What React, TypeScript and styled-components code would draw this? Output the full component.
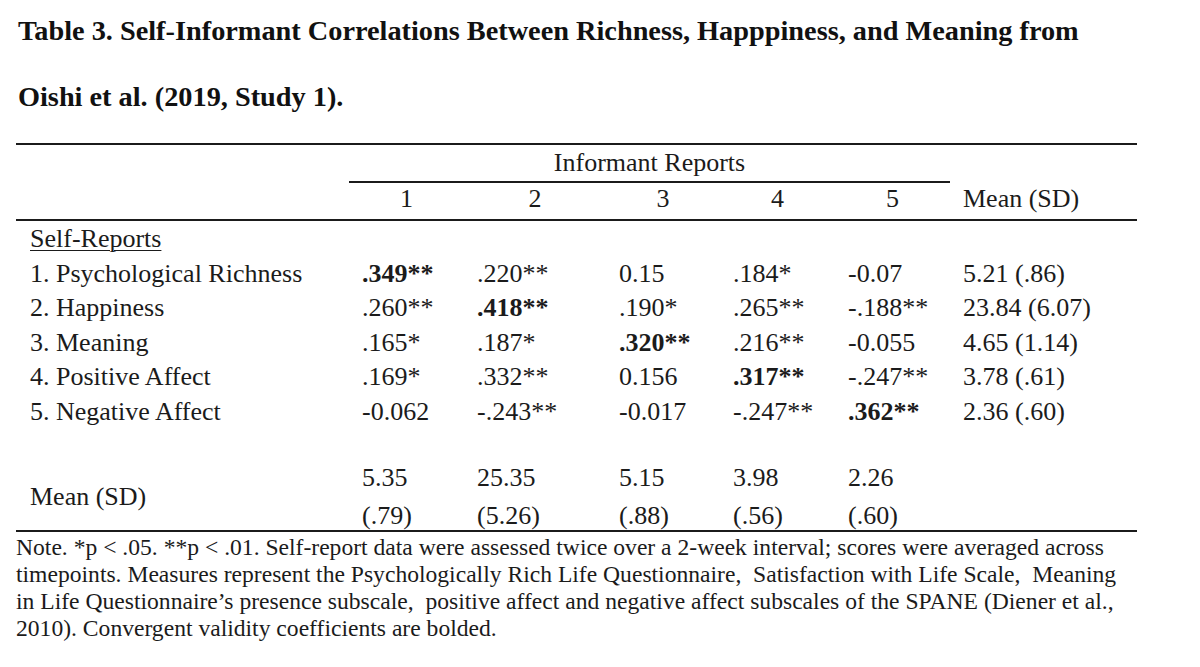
import React from "react";
import styled, { createGlobalStyle } from "styled-components";

const GlobalStyle = createGlobalStyle`
  html, body { margin: 0; padding: 0; background: #ffffff; }
  body {
    font-family: "Liberation Serif", "Times New Roman", serif;
    color: #1b1b1b;
  }
`;

const COLS = "333px 115px 142px 114px 115px 115px 187px";

const Page = styled.div`
  width: 1200px;
  height: 667px;
  overflow: hidden;
  padding-left: 16px;
  box-sizing: border-box;
`;

const Title = styled.h1`
  margin: -2px 0 0 2px;
  font-size: 28.3px;
  font-weight: 700;
  line-height: 66px;
  color: #111;
  white-space: nowrap;
`;

const Table = styled.div`
  margin-top: 13px;
  width: 1121px;
  border-top: 2px solid #1b1b1b;
`;

const Row = styled.div<{ $lh: number; $pt?: number; $pb?: number; $rule?: boolean }>`
  display: grid;
  grid-template-columns: ${COLS};
  font-size: 26px;
  line-height: ${(p) => p.$lh}px;
  padding-top: ${(p) => p.$pt ?? 0}px;
  padding-bottom: ${(p) => p.$pb ?? 0}px;
  border-bottom: ${(p) => (p.$rule ? "2px solid #1b1b1b" : "none")};
  white-space: nowrap;
`;

const SpanHead = styled.div`
  grid-column: 2 / 7;
  text-align: center;
  padding-top: 5px;
  padding-bottom: 5px;
  border-bottom: 2px solid #1b1b1b;
`;

const Cell = styled.div<{ $center?: boolean; $bold?: boolean }>`
  padding-left: ${(p) => (p.$center ? 0 : 13)}px;
  text-align: ${(p) => (p.$center ? "center" : "left")};
  font-weight: ${(p) => (p.$bold ? 700 : 400)};
`;

const Label = styled.div<{ $under?: boolean }>`
  padding-left: 14px;
  text-decoration: ${(p) => (p.$under ? "underline" : "none")};
  text-underline-offset: 3px;
  text-decoration-thickness: 1px;
`;

const MidLabel = styled(Label)`
  display: flex;
  align-items: center;
`;

const Stack = styled.div`
  display: flex;
  flex-direction: column;
  gap: 10px;
  padding-left: 13px;
  line-height: 28px;
`;

const Note = styled.div`
  font-size: 23.6px;
  line-height: 27px;
  margin-top: 2px;
  white-space: pre;
  color: #1b1b1b;
`;

type R = { label: string; vals: string[]; bold: number; mean: string };

const rows: R[] = [
  { label: "1. Psychological Richness", vals: [".349**", ".220**", "0.15", ".184*", "-0.07"], bold: 0, mean: "5.21 (.86)" },
  { label: "2. Happiness", vals: [".260**", ".418**", ".190*", ".265**", "-.188**"], bold: 1, mean: "23.84 (6.07)" },
  { label: "3. Meaning", vals: [".165*", ".187*", ".320**", ".216**", "-0.055"], bold: 2, mean: "4.65 (1.14)" },
  { label: "4. Positive Affect", vals: [".169*", ".332**", "0.156", ".317**", "-.247**"], bold: 3, mean: "3.78 (.61)" },
  { label: "5. Negative Affect", vals: ["-0.062", "-.243**", "-0.017", "-.247**", ".362**"], bold: 4, mean: "2.36 (.60)" },
];

const means: [string, string][] = [
  ["5.35", "(.79)"],
  ["25.35", "(5.26)"],
  ["5.15", "(.88)"],
  ["3.98", "(.56)"],
  ["2.26", "(.60)"],
];

export default function App() {
  return (
    <>
      <GlobalStyle />
      <Page>
        <Title>
          Table 3. Self-Informant Correlations Between Richness, Happpiness, and Meaning from
          <br />
          Oishi et al. (2019, Study 1).
        </Title>
        <Table>
          <Row $lh={26}>
            <div />
            <SpanHead>Informant Reports</SpanHead>
            <div />
          </Row>
          <Row $lh={26} $pt={3} $pb={7} $rule>
            <div />
            {["1", "2", "3", "4", "5"].map((h) => (
              <Cell key={h} $center>
                {h}
              </Cell>
            ))}
            <Cell>Mean (SD)</Cell>
          </Row>
          <Row $lh={36}>
            <Label $under>Self-Reports</Label>
          </Row>
          {rows.map((r) => (
            <Row $lh={34.4} key={r.label}>
              <Label>{r.label}</Label>
              {r.vals.map((v, i) => (
                <Cell key={i} $bold={i === r.bold}>
                  {v}
                </Cell>
              ))}
              <Cell>{r.mean}</Cell>
            </Row>
          ))}
          <Row $lh={28} $pt={35} $rule>
            <MidLabel>Mean (SD)</MidLabel>
            {means.map(([a, b], i) => (
              <Stack key={i}>
                <span>{a}</span>
                <span>{b}</span>
              </Stack>
            ))}
            <div />
          </Row>
        </Table>
        <Note>
          {"Note. *p < .05. **p < .01. Self-report data were assessed twice over a 2-week interval; scores were averaged across"}
          <br />
          {"timepoints. Measures represent the Psychologically Rich Life Questionnaire,  Satisfaction with Life Scale,  Meaning"}
          <br />
          {"in Life Questionnaire\u2019s presence subscale,  positive affect and negative affect subscales of the SPANE (Diener et al.,"}
          <br />
          {"2010). Convergent validity coefficients are bolded."}
        </Note>
      </Page>
    </>
  );
}
